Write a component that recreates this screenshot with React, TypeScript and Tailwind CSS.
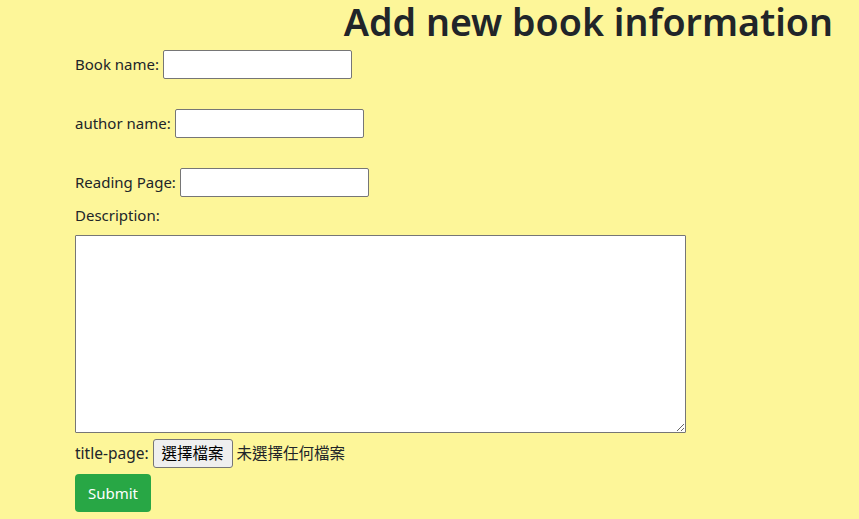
export default function App() {
  const font = { fontFamily: '"Noto Sans", "Noto Sans CJK TC", sans-serif' };
  return (
    <div className="min-h-[519px] w-full bg-[#fdf699] text-[#212529]" style={font}>
      <div className="flex h-[48px] justify-end pr-[26px]">
        <h1 className="m-0 text-[37.6px] font-semibold leading-[44px]">Add new book information</h1>
      </div>
      <form className="flex flex-col pl-[75px] pt-[2px] text-[15px]">
        <div className="flex h-[29px] items-center gap-[4px]">
          <label>Book name:</label>
          <input className="h-[29px] w-[189px] rounded-[2px] border border-[#767676] bg-white" />
        </div>
        <div className="mt-[30px] flex h-[29px] items-center gap-[4px]">
          <label>author name:</label>
          <input className="h-[29px] w-[189px] rounded-[2px] border border-[#767676] bg-white" />
        </div>
        <div className="mt-[30px] flex h-[29px] items-center gap-[4px]">
          <label>Reading Page:</label>
          <input className="h-[29px] w-[189px] rounded-[2px] border border-[#767676] bg-white" />
        </div>
        <label className="mt-[6px] h-[24px] leading-[24px]">Description:</label>
        <textarea className="mt-[8px] h-[198px] w-[611px] rounded-[1px] border border-[#767676] bg-white" />
        <div className="mt-[6px] flex h-[29px] items-center gap-[4px]">
          <span className="text-[15.5px]">title-page:</span>
          <span className="flex h-[29px] w-[80px] items-center justify-center rounded-[3px] border border-[#767676] bg-[#efefef] text-[15.5px] text-black">
            選擇檔案
          </span>
          <span className="text-[15.5px] text-[#212529]">未選擇任何檔案</span>
        </div>
        <button
          type="button"
          className="mt-[6px] h-[38px] w-[76px] rounded-[4px] bg-[#28a745] text-[15px] text-white"
        >
          Submit
        </button>
      </form>
    </div>
  );
}
